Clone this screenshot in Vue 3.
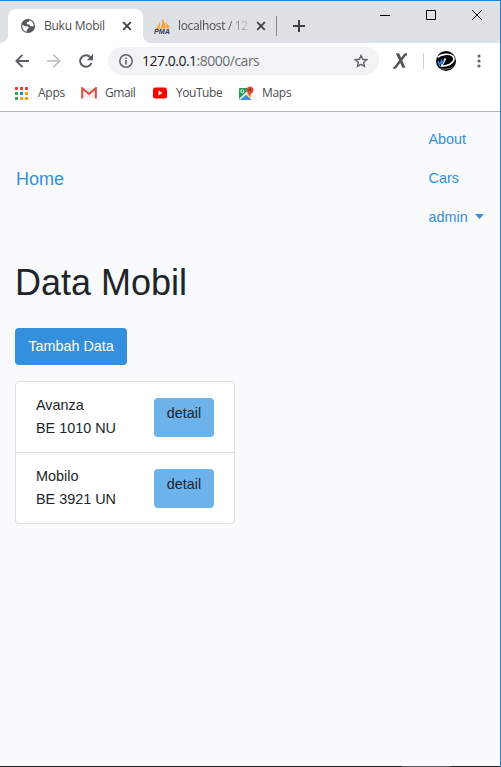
<script setup>
const cars = [
  { name: 'Avanza', plate: 'BE 1010 NU' },
  { name: 'Mobilo', plate: 'BE 3921 UN' },
]
const dots = [
  '#ea4335', '#ea4335', '#ea4335',
  '#34a853', '#1a88e8', '#f4a400',
  '#34a853', '#f4a400', '#f4a400',
]
</script>

<template>
  <div class="window">
    <header class="chrome">
      <div class="tabstrip">
        <div class="tab active">
          <svg class="fav" width="16" height="16" viewBox="0 0 16 16">
            <circle cx="8" cy="8" r="7" fill="#55595e" />
            <path d="M2.300 6.800 5 8.200h2.600l1.300 1.400-.9 1.500-1.300.6v2.200C4 13.400 2 10.500 2.300 6.800zM9.300 2.200l-.5 1.600-2.200.7.4 1.700 2.500.2.500 1.400 1.700.6 2-.4C13.800 5.300 12 2.800 9.300 2.200z" fill="#fff" />
          </svg>
          <span class="title">Buku Mobil</span>
          <svg class="x" width="10" height="10" viewBox="0 0 10 10"><path d="M1.200 1.200l7.600 7.600M8.800 1.200L1.200 8.800" stroke="#3c4043" stroke-width="1.800" /></svg>
        </div>
        <div class="tab idle">
          <svg class="pma" width="17" height="17" viewBox="0 0 17 17">
            <path d="M1 11C3.500 9 5 6.500 5.500 3.500c.8 3 .6 5 0 7.500zM6 11C8 7.500 8.300 3.500 8 .6c2.800 3 3.900 6.500 3.600 10zM12 10.500c.5-2.500.3-4-.3-6 2.300 1.500 3.700 3.800 4.300 6z" fill="#f9a53a" />
            <text x="0" y="16.300" class="pmatext" textLength="16" lengthAdjust="spacingAndGlyphs">PMA</text>
          </svg>
          <span class="title fade">localhost / 12</span>
          <svg class="x" width="10" height="10" viewBox="0 0 10 10"><path d="M1.200 1.200l7.600 7.600M8.800 1.200L1.200 8.800" stroke="#3c4043" stroke-width="1.800" /></svg>
        </div>
        <i class="tabsep"></i>
        <svg class="plus" width="12" height="12" viewBox="0 0 12 12"><path d="M6 0v12M0 6h12" stroke="#3c4043" stroke-width="2" /></svg>
        <div class="controls">
          <svg width="10" height="10" viewBox="0 0 10 10"><path d="M0 5.500h10" stroke="#000" /></svg>
          <svg width="10" height="10" viewBox="0 0 10 10"><path d="M.5.5h9v9h-9z" fill="none" stroke="#000" /></svg>
          <svg width="10" height="10" viewBox="0 0 10 10"><path d="M0 0l10 10M10 0L0 10" stroke="#000" /></svg>
        </div>
      </div>

      <div class="toolbar">
        <svg class="nav-icon" width="14" height="14" viewBox="0 0 14 14"><path d="M14 7H1.500M7.500 .8L1.300 7l6.200 6.200" fill="none" stroke="#5a5e63" stroke-width="1.900" /></svg>
        <svg class="nav-icon" width="14" height="14" viewBox="0 0 14 14"><path d="M0 7h12.500M6.500 .8L12.700 7l-6.200 6.200" fill="none" stroke="#b9bbbe" stroke-width="1.700" /></svg>
        <svg class="nav-icon" width="14" height="14" viewBox="0 0 14 14"><path d="M12.400 9A5.800 5.800 0 1 1 11.300 3.100L13 4.800" fill="none" stroke="#5a5e63" stroke-width="2" /><path d="M14 0v6.200H7.800z" fill="#5a5e63" /></svg>
        <div class="omnibox">
          <svg width="14" height="14" viewBox="0 0 14 14"><circle cx="7" cy="7" r="6.200" fill="none" stroke="#5f6368" stroke-width="1.500" /><path d="M7 6v4.400M7 3.400V5" stroke="#5f6368" stroke-width="1.600" /></svg>
          <span class="url"><b>127.0.0.1</b>:8000/cars</span>
          <svg class="star" width="14" height="14" viewBox="0 0 14 14"><path d="M7 1.500l1.600 3.800 4.100.4-3.100 2.700.9 4L7 10.300l-3.500 2.100.9-4L1.300 5.700l4.100-.4z" fill="none" stroke="#5f6368" stroke-width="1.400" /></svg>
        </div>
        <svg class="ext" width="15" height="17" viewBox="0 0 15 17"><path d="M2.800.2h3.400L12.500 14.800H9.400z" fill="#55585b" /><path d="M14 .2V2.600h-1L4 14.300c-.8 1-1.500 1.700-2.600 1.700H.3v-2.300h.9L10.800 1.300C11.500.5 12 .2 12.800.2z" fill="#55585b" /></svg>
        <i class="toolsep"></i>
        <svg class="avatar" width="20" height="20" viewBox="0 0 20 20">
          <circle cx="10" cy="10" r="10" fill="#000" />
          <path d="M1.500 6.300C5 3 13 2.300 16.500 4.800c3 2.500 1 6.700-3 8.700-2.500 1.200-5 1.700-8 1.500L9.500 7.500" fill="none" stroke="#fff" stroke-width="1.600" />
          <path d="M2 10l1.500 4 2-4.500.7 2.800L8 9" fill="none" stroke="#3e82d3" stroke-width="1.500" />
          <path d="M3 17.300c4 1.500 10 1.200 14-1.500" fill="none" stroke="#999" stroke-width=".8" />
        </svg>
        <svg class="menu" width="4" height="14" viewBox="0 0 4 14"><g fill="#5f6368"><circle cx="2" cy="2" r="1.600" /><circle cx="2" cy="7" r="1.600" /><circle cx="2" cy="12" r="1.600" /></g></svg>
      </div>

      <div class="bookmarks">
        <span class="apps"><i v-for="(c, i) in dots" :key="i" :style="{ background: c }"></i></span>
        <span class="bm t1">Apps</span>
        <svg class="gmail" width="16" height="12" viewBox="0 0 16 12"><path d="M2 1h12v10H2z" fill="#eee" /><path d="M1.200 11.500V1.200L8 7l6.800-5.800v10.300" fill="none" stroke="#dc4b3e" stroke-width="2" /></svg>
        <span class="bm t2">Gmail</span>
        <svg class="yt" width="14" height="12" viewBox="0 0 14 12"><rect width="14" height="11" y=".5" rx="2.500" fill="#f00" /><path d="M5.500 3.500L9.500 6l-4 2.500z" fill="#fff" /></svg>
        <span class="bm t3">YouTube</span>
        <svg class="maps" width="16" height="15" viewBox="0 0 16 15">
          <rect x="1" y="2" width="12" height="12" rx="1" fill="#21a15a" />
          <path d="M1 13L11 3l2 2v8.500L8 9l-6 5z" fill="#eceff1" /><path d="M3 14l5-5 5 5z" fill="#4285f4" />
          <path d="M8.700 8.500L10.500 7l2.500 3v2.500z" fill="#fbc02d" />
          <circle cx="4.300" cy="5.300" r="1.500" fill="none" stroke="#fff" />
          <path d="M11.800 11c0-3-3.300-4-3.300-7a3.500 3.500 0 0 1 7 0c0 3-3.700 4-3.700 7z" fill="#df4a3d" /><circle cx="12" cy="4" r="1.300" fill="#812c24" />
        </svg>
        <span class="bm t4">Maps</span>
      </div>
    </header>

    <main class="page">
      <nav class="navbar">
        <a class="brand">Home</a>
        <div class="links">
          <a>About</a>
          <a>Cars</a>
          <a class="drop">admin<i class="caret"></i></a>
        </div>
      </nav>
      <section class="content">
        <h1>Data Mobil</h1>
        <a class="btn">Tambah Data</a>
        <ul class="list">
          <li v-for="car in cars" :key="car.plate">
            <div>{{ car.name }}<br />{{ car.plate }}</div>
            <a class="detail">detail</a>
          </li>
        </ul>
      </section>
    </main>
    <footer class="taskbar"><i></i></footer>
  </div>
</template>

<style>
body { margin: 0; overflow: hidden; }
</style>

<style scoped>
* { box-sizing: border-box; }
svg, i { display: block; flex: none; }
.window {
  width: 501px; height: 767px; display: flex; flex-direction: column;
  border-top: 1px solid #1583d8; border-right: 1px solid #1583d8;
  background: #f8fafc; font-family: "Liberation Sans", Arial, sans-serif;
}
.chrome {
  height: 111px; flex: none; background: #fff; border-bottom: 1px solid #b3b5b6;
  font-family: "Open Sans", "Noto Sans", sans-serif; font-size: 12px; color: #4a4d51;
}
.tabstrip {
  height: 42px; display: flex; padding-left: 8px;
  background:
    radial-gradient(circle at 0 0, #dee1e6 7.500px, #fff 8.500px) 0 34px / 8px 8px no-repeat,
    radial-gradient(circle at 100% 0, #dee1e6 7.500px, #fff 8.500px) 143px 34px / 8px 8px no-repeat,
    #dee1e6;
}
.tab { display: flex; align-items: center; height: 34px; margin-top: 8px; white-space: nowrap; }
.active { width: 135px; background: #fff; border-radius: 8px 8px 0 0; padding-left: 12px; }
.idle { width: 133px; padding-left: 11px; }
.title { line-height: 18px; }
.active .title { margin-left: 8px; width: 78px; letter-spacing: -.25px; }
.idle .title { margin-left: 7px; width: 71px; letter-spacing: -.35px; }
.idle .x { margin-left: 7px; }
.fade { -webkit-mask-image: linear-gradient(90deg, #000 68%, rgba(0, 0, 0, .15) 100%); mask-image: linear-gradient(90deg, #000 68%, rgba(0, 0, 0, .15) 100%); }
.pmatext { font: italic bold 6.500px "Liberation Sans", Arial, sans-serif; fill: #34375f; }
.tabsep { width: 1px; height: 20px; margin-top: 15px; background: #85888c; }
.plus { margin: 19px 0 0 16px; }
.controls { display: flex; gap: 36px; margin: 9px 0 0 75px; }
.toolbar { height: 36px; display: flex; align-items: center; padding-left: 15px; }
.nav-icon { margin-right: 18px; }
.nav-icon:nth-child(3) { margin-right: 15px; }
.omnibox { width: 271px; height: 28px; border-radius: 14px; background: #f1f3f4; display: flex; align-items: center; padding: 0 11px; }
.url { margin-left: 9px; font-size: 14px; line-height: 20px; color: #6b6e72; letter-spacing: -.5px; white-space: nowrap; }
.url b { font-weight: 400; color: #202124; }
.star { margin-left: auto; }
.ext { margin-left: 14px; }
.toolsep { width: 1px; height: 16px; margin-left: 15px; background: #cfd1d4; }
.avatar { margin-left: 12px; }
.menu { margin-left: 20.500px; }
.bookmarks { height: 28px; display: flex; align-items: center; padding-left: 15px; }
.apps { display: grid; grid-template-columns: repeat(3, 3px); gap: 2px; }
.apps i { width: 3px; height: 3px; }
.bm { line-height: 18px; white-space: nowrap; }
.t1 { margin-left: 10px; width: 43px; letter-spacing: -.25px; }
.t2 { margin-left: 8px; width: 48px; letter-spacing: -.45px; }
.t3 { margin-left: 9px; width: 62px; letter-spacing: -.45px; }
.t4 { margin-left: 8px; letter-spacing: -.3px; }
.page { flex: 1; font-size: 14.4px; line-height: 23.04px; color: #212529; }
.navbar { display: flex; align-items: center; justify-content: space-between; padding: 8px 16px; color: #3490dc; }
.brand { font-size: 18px; padding-top: 2px; }
.links { display: flex; flex-direction: column; width: 55.500px; }
.links a { padding: 8px 0; }
.drop { display: flex; align-items: center; justify-content: space-between; }
.caret { margin-bottom: 2px; width: 9px; height: 5px; background: #3490dc; clip-path: polygon(0 0, 100% 0, 50% 100%); }
.content { padding: 16px 15px; }
h1 { margin: 0; font-size: 36px; font-weight: 500; line-height: 43px; }
.btn { display: block; width: 112px; height: 37px; margin-top: 24px; padding: 7px 0; text-align: center; color: #fff; background: #3490dc; border-radius: 4px; }
.list { list-style: none; width: 220px; margin: 16px 0 0; padding: 0; background: #fff; border: 1px solid #dfdfdf; border-radius: 4px; }
li { display: flex; justify-content: space-between; height: 71px; padding: 12px 20px; }
li + li { border-top: 1px solid #dfdfdf; }
li:first-child { height: 70px; }
.detail { width: 60px; height: 39px; margin-top: 4px; padding-top: 4px; text-align: center; background: #6cb2eb; border-radius: 4px; }
.taskbar { height: 1px; background: #202428; }
.taskbar i { width: 48px; height: 1px; margin-left: 402px; background: #5b5f62; }
</style>
